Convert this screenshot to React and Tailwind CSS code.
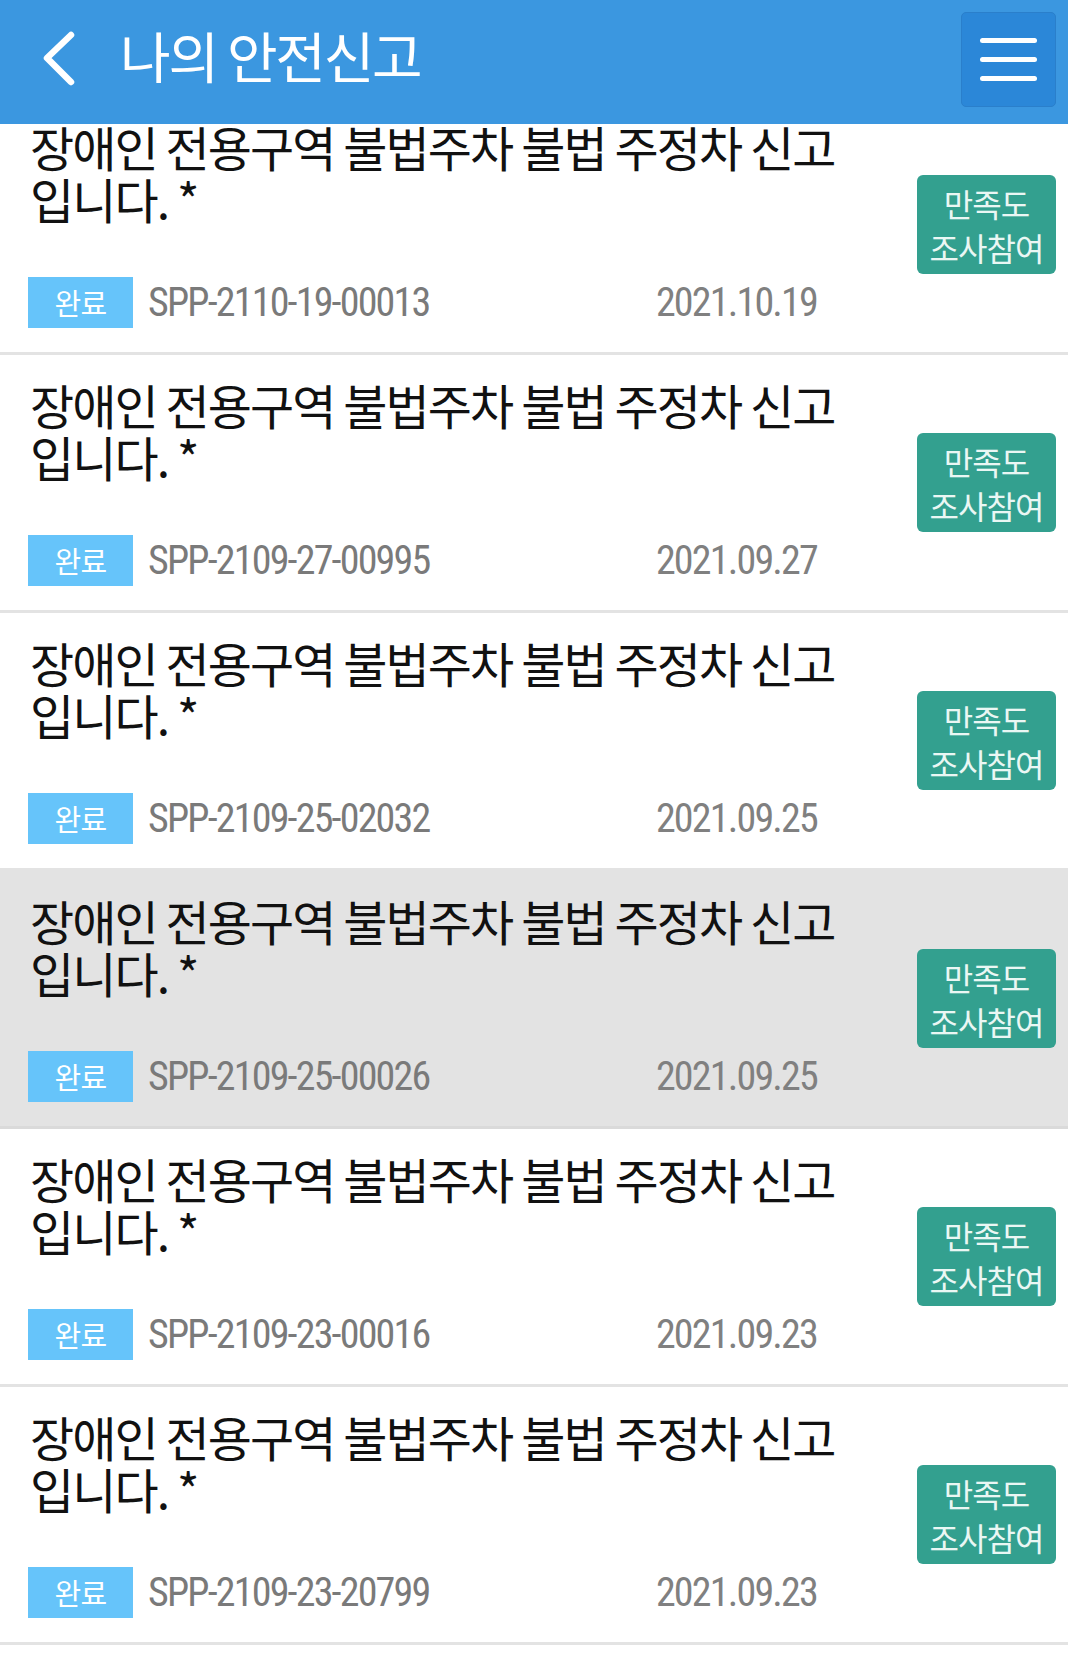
import React from "react";

const items = [
  { id: "SPP-2110-19-00013", date: "2021.10.19" },
  { id: "SPP-2109-27-00995", date: "2021.09.27" },
  { id: "SPP-2109-25-02032", date: "2021.09.25" },
  { id: "SPP-2109-25-00026", date: "2021.09.25", active: true },
  { id: "SPP-2109-23-00016", date: "2021.09.23" },
  { id: "SPP-2109-23-20799", date: "2021.09.23" },
];

const KR = { fontFamily: "'Noto Sans CJK KR', 'Noto Sans', sans-serif" };
const NARROW = { fontFamily: "'Roboto Condensed', 'Liberation Sans Narrow', Roboto, sans-serif" };

function Item({ id, date, active }) {
  return (
    <div
      className={
        "flex items-center pl-[28px] pr-[12px] h-[258px] border-b-[3px] " +
        (active ? "bg-[#e3e3e3] border-[#dadada]" : "bg-white border-[#e3e3e3]")
      }
    >
      <div className="flex-1 min-w-0 pr-[17px] flex flex-col pt-[23px] pb-[24px]">
        <p
          className="text-[48px] leading-[52px] tracking-[-0.04em] text-[#111111] pl-[2px] break-keep"
          style={KR}
        >
          장애인 전용구역 불법주차 불법 주정차 신고 입니다. *
        </p>
        <div className="mt-[53px] flex items-center h-[51px] pr-[83px]">
          <span
            className="w-[105px] h-[51px] bg-[#66c4fa] text-white text-[29px] flex items-center justify-center tracking-[-0.02em]"
            style={KR}
          >
            완료
          </span>
          <span className="ml-[15px] text-[40px] tracking-[-0.045em] text-[#7a7a7a] leading-none" style={NARROW}>
            {id}
          </span>
          <span className="ml-auto text-[40px] tracking-[-0.045em] text-[#808080] leading-none" style={NARROW}>
            {date}
          </span>
        </div>
      </div>
      <div
        className="w-[139px] h-[99px] shrink-0 rounded-[6px] bg-[#33a08f] text-[#eaf7f4] flex flex-col items-center justify-center text-[32px] leading-[44px] tracking-[-0.03em]"
        style={KR}
      >
        <span>만족도</span>
        <span>조사참여</span>
      </div>
    </div>
  );
}

export default function App() {
  return (
    <div className="w-[1068px] h-[1656px] overflow-hidden bg-white relative">
      <header className="relative z-10 h-[124px] bg-[#3b97e0] flex items-center pl-[40px] pr-[12px] pb-[10px]">
        <svg width="40" height="60" viewBox="0 0 40 60" className="shrink-0">
          <polyline
            points="31,8 7,31 31,55"
            fill="none"
            stroke="white"
            strokeWidth="6.5"
            strokeLinecap="round"
            strokeLinejoin="round"
          />
        </svg>
        <h1
          className="ml-[40px] mb-[6px] text-white text-[55px] tracking-[-0.04em] leading-none"
          style={KR}
        >
          나의 안전신고
        </h1>
        <button className="ml-auto self-start mt-[12px] w-[95px] h-[95px] rounded-[5px] bg-[#2b87d8] border border-[#2a7fcb] flex flex-col items-center justify-center gap-[14px]">
          <span className="block w-[57px] h-[5px] rounded-full bg-white" />
          <span className="block w-[57px] h-[5px] rounded-full bg-white" />
          <span className="block w-[57px] h-[5px] rounded-full bg-white" />
        </button>
      </header>
      <div className="-mt-[27px]">
        {items.map((it, i) => (
          <Item key={i} {...it} />
        ))}
      </div>
    </div>
  );
}
